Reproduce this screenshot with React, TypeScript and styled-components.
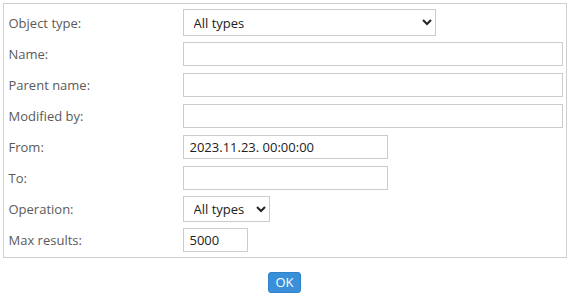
import styled, { createGlobalStyle } from 'styled-components';

const GlobalStyle = createGlobalStyle`
  html, body {
    margin: 0;
    padding: 0;
    background: #fff;
  }
  body {
    font-family: 'Open Sans', 'Noto Sans', sans-serif;
    font-size: 13px;
  }
`;

const Page = styled.div`
  padding: 3px 9px 0 3px;
  display: flex;
  flex-direction: column;
  align-items: center;
`;

const FormBox = styled.div`
  width: 564px;
  box-sizing: border-box;
  border: 1px solid #cfcfcf;
  padding: 3px 0 2px 4px;
  display: flex;
  flex-direction: column;
`;

const Row = styled.div`
  height: 31px;
  display: grid;
  grid-template-columns: 175px 1fr;
  align-items: center;
`;

const Label = styled.label`
  color: #5a5a5a;
  padding-left: 1px;
`;

const Field = styled.input<{ $width?: number }>`
  box-sizing: border-box;
  width: ${(p) => (p.$width ? `${p.$width}px` : '380px')};
  height: 24px;
  border: 1px solid #cccccc;
  padding: 0 6px;
  font-family: 'Open Sans', 'Noto Sans', sans-serif;
  font-size: 13px;
  color: #222;
  outline: none;
  border-radius: 0;
`;

const Select = styled.select<{ $width: number; $height: number }>`
  box-sizing: border-box;
  width: ${(p) => p.$width}px;
  height: ${(p) => p.$height}px;
  border: 1px solid #cccccc;
  border-radius: 0;
  background: #fff;
  padding: 0 6px;
  font-family: 'Open Sans', 'Noto Sans', sans-serif;
  font-size: 13px;
  color: #222;
  outline: none;
`;

const Footer = styled.div`
  padding-top: 14px;
  display: flex;
  justify-content: center;
`;

const OkButton = styled.button`
  height: 21px;
  padding: 0 6px;
  background: #3a8fd9;
  border: 1px solid #2f82cc;
  border-radius: 3px;
  color: #fff;
  font-family: 'Open Sans', 'Noto Sans', sans-serif;
  font-size: 13px;
  line-height: 19px;
  cursor: pointer;
`;

const App = () => {
  return (
    <>
      <GlobalStyle />
      <Page>
        <FormBox>
          <Row>
            <Label>Object type:</Label>
            <Select $width={253} $height={27} defaultValue="all">
              <option value="all">All types</option>
            </Select>
          </Row>
          <Row>
            <Label>Name:</Label>
            <Field />
          </Row>
          <Row>
            <Label>Parent name:</Label>
            <Field />
          </Row>
          <Row>
            <Label>Modified by:</Label>
            <Field />
          </Row>
          <Row>
            <Label>From:</Label>
            <Field $width={205} defaultValue="2023.11.23. 00:00:00" />
          </Row>
          <Row>
            <Label>To:</Label>
            <Field $width={205} />
          </Row>
          <Row>
            <Label>Operation:</Label>
            <Select $width={87} $height={26} defaultValue="all">
              <option value="all">All types</option>
            </Select>
          </Row>
          <Row>
            <Label>Max results:</Label>
            <Field $width={65} defaultValue="5000" />
          </Row>
        </FormBox>
        <Footer>
          <OkButton>OK</OkButton>
        </Footer>
      </Page>
    </>
  );
};

export default App;
